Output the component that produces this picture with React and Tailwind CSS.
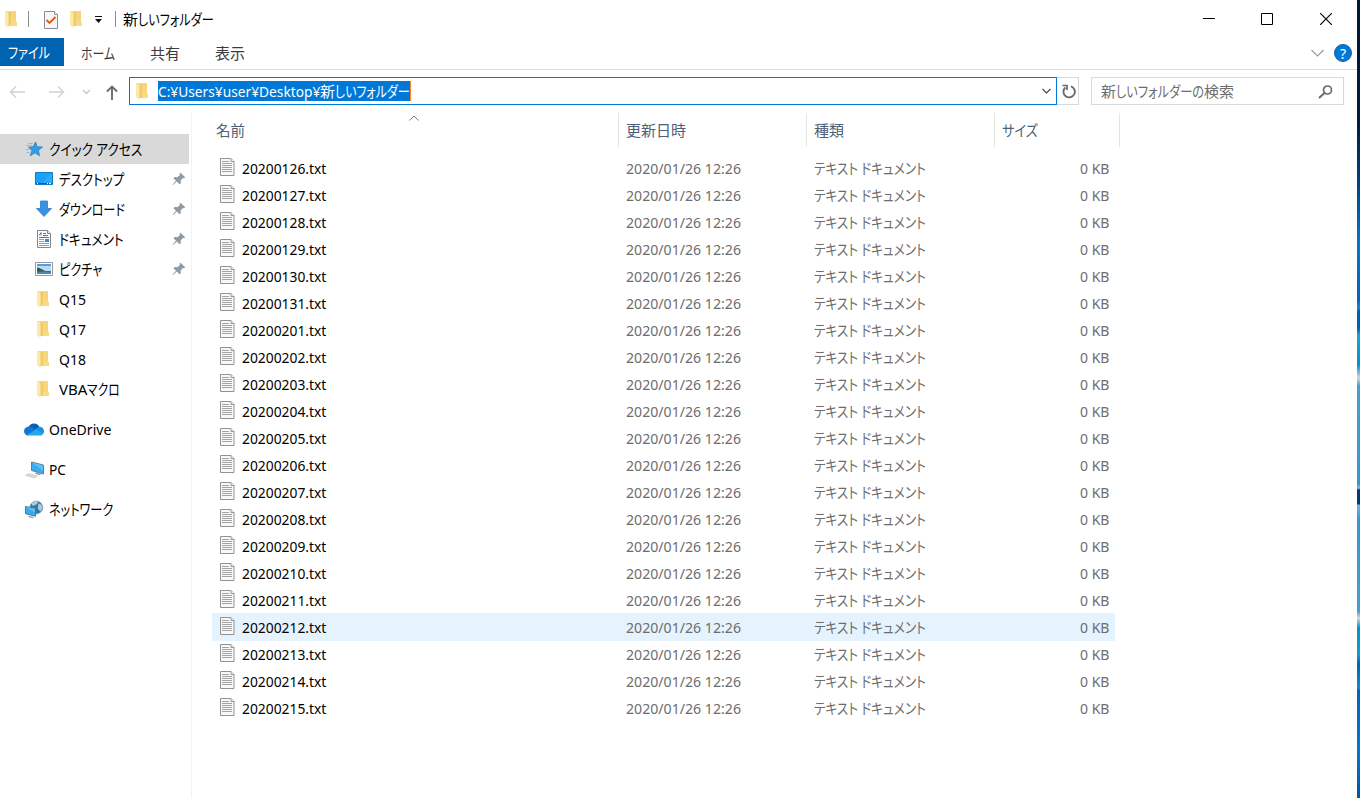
import { useLayoutEffect, useRef, useState } from "react"

const files = [
  "20200126", "20200127", "20200128", "20200129", "20200130", "20200131", "20200201",
  "20200202", "20200203", "20200204", "20200205", "20200206", "20200207", "20200208",
  "20200209", "20200210", "20200211", "20200212", "20200213", "20200214", "20200215"
]

const quickItems = [
  { label: "デスクトップ", width: 65, icon: DesktopIcon, pinned: true },
  { label: "ダウンロード", width: 66, icon: DownloadIcon, pinned: true },
  { label: "ドキュメント", width: 65, icon: DocumentIcon, pinned: true },
  { label: "ピクチャ", width: 43, icon: PictureIcon, pinned: true },
  { label: "Q15", width: 27, icon: FolderIcon },
  { label: "Q17", width: 27, icon: FolderIcon },
  { label: "Q18", width: 27, icon: FolderIcon }
]

// Condenses a run of text to a fixed advance width, like a narrow UI font does
function Fit({ w, latin, children }) {
  const ref = useRef(null)
  const [scale, setScale] = useState(1)

  useLayoutEffect(() => {
    setScale(w / ref.current.offsetWidth)
  }, [w, children])

  return (
    <span className="inline-block shrink-0 align-baseline" style={{ width: w }}>
      <span
        ref={ref}
        className={`inline-block origin-left whitespace-pre ${latin ? "text-[14.5px]" : "[font-feature-settings:'palt']"}`}
        style={{ transform: `scaleX(${scale})` }}
      >
        {children}
      </span>
    </span>
  )
}

function FolderIcon() {
  return (
    <svg width="18" height="18" viewBox="0 0 18 18">
      <path d="M2.500 1H13v10.500l1 .8V16H5z" fill="#f8dc84" />
      <path d="M5 2h3v14H5z" fill="#efcb6c" />
      <path d="M8 1h5v10.500H8z" fill="#f6d67c" />
      <path d="M2 1l3.500 2.200V18L2 15z" fill="#fde9a6" />
    </svg>
  )
}

function CheckPageIcon() {
  return (
    <svg width="16" height="18" viewBox="0 0 16 18">
      <path d="M1.500.5h10l3 3v14h-13z" fill="#f5f6f7" stroke="#8a8f94" />
      <path d="M11.500.5v3h3" fill="#fff" stroke="#8a8f94" />
      <path d="M3.500 9l3 3L12.500 6" fill="none" stroke="#e8560f" strokeWidth="1.900" />
    </svg>
  )
}

function TextFileIcon() {
  return (
    <svg width="15" height="19" viewBox="0 0 15 19">
      <path d="M.5.5h10.500l3 3v14H.5z" fill="#f8f8f8" stroke="#929292" />
      <path d="M11 .5v3h3" fill="#fff" stroke="#929292" />
      <path d="M2 3.500h7M2 5.500h10M2 7.500h10M2 9.500h10M2 11.500h10M2 13.500h10" stroke="#a4a4a4" />
    </svg>
  )
}

function StarIcon() {
  return (
    <svg width="18" height="18" viewBox="0 0 18 18">
      <path d="M9.500 2l1.700 4.800 5.300.2-4 3.300 1 5.500-4.500-3-4.800 3L6 10.500 2.500 7.200l4.700-.4z" fill="#2e9fe6" stroke="#1877bd" strokeWidth=".7" />
      <path d="M2.500 3.500h4M.5 5.500h5M0 9.500h3.500M.5 12.500h3" stroke="#7db9df" strokeWidth=".9" />
    </svg>
  )
}

function DesktopIcon() {
  return (
    <svg width="18" height="18" viewBox="0 0 18 18">
      <path d="M.5 2.500h17v12H.5z" fill="#18a2fb" stroke="#1579bd" />
      <path d="M17 3v11L6 14z" fill="#42b2fb" opacity=".5" />
      <path d="M1 13.500h16" stroke="#0b5d9c" />
      <path d="M2 13.500h1M12 13.500h1M14 13.500h2" stroke="#fff" />
    </svg>
  )
}

function DownloadIcon() {
  return (
    <svg width="18" height="18" viewBox="0 0 18 18">
      <path d="M5.500 1h7v7.500h4L9 16.500 1.500 8.500h4z" fill="#3a93e0" stroke="#2d7cc4" strokeWidth=".8" />
    </svg>
  )
}

function DocumentIcon() {
  return (
    <svg width="18" height="20" viewBox="0 0 18 20">
      <path d="M2.500 1.500h10l3 3v14h-13z" fill="#fff" stroke="#858585" />
      <path d="M12.500 1.500v3h3" fill="#eee" stroke="#858585" />
      <path d="M4 6.500l2-3v3M8 4.500h3M8 6.500h5M4 8.500h10" fill="none" stroke="#2980c2" />
      <path d="M4 10.500h5M4 12.500h5M4 14.500h10M4 16.500h10" stroke="#999" />
      <path d="M10 10h4v3h-4z" fill="#3a8bc4" />
    </svg>
  )
}

function PictureIcon() {
  return (
    <svg width="18" height="18" viewBox="0 0 18 18">
      <path d="M.5 2.500h17v13H.5z" fill="#fff" stroke="#989898" />
      <path d="M2 4h14v10H2z" fill="#b4dbf5" />
      <path d="M2 4h14v2H2z" fill="#5b9be0" />
      <path d="M2 7.500c3 .5 6 2 8 3.500h6v1H2z" fill="#34584f" />
      <path d="M2 11.500h14V14H2z" fill="#4c86a8" />
    </svg>
  )
}

function OneDriveIcon() {
  return (
    <svg width="20" height="14" viewBox="0 0 20 14">
      <path d="M4.500 5A6 6 0 0 1 15.500 5L11 8z" fill="#0a5fb4" />
      <path d="M4.500 4.800C2 4.800 0 6.700 0 9.200s2 4.300 4.300 4.300L13 8.500 8 5.300C7 4.700 5.500 4.600 4.500 4.800z" fill="#0f78d4" />
      <path d="M11.500 7.800l4-3c2.600 0 4.500 2 4.500 4.400 0 2.300-1.800 4.300-4.200 4.300z" fill="#1490df" />
      <path d="M2.500 12.900L12.500 7.500l6.800 4c-.8 1.300-2 2-3.500 2H4.500c-.8 0-1.400-.2-2-.6z" fill="#28a8ea" />
    </svg>
  )
}

function PcIcon() {
  return (
    <svg width="20" height="18" viewBox="0 0 20 18">
      <path d="M6.500 1l12 3v9l-12-3.500z" fill="#36adf0" stroke="#66737c" strokeWidth=".9" />
      <path d="M7 1.500l11 2.800v5.700z" fill="#75ccf8" opacity=".6" />
      <path d="M11 11.500l5 1.500-1 1.200-5-1.500z" fill="#8b969e" />
      <path d="M3.500 12.500l9 2.500-3 2-9-2.500z" fill="#d5dade" stroke="#b4bbc1" strokeWidth=".5" />
    </svg>
  )
}

function NetworkIcon() {
  return (
    <svg width="20" height="20" viewBox="0 0 20 20">
      <circle cx="12.300" cy="7.500" r="6.500" fill="#3878a0" stroke="#8fa9b8" strokeWidth=".7" />
      <path d="M7.500 3.500c2-2.500 5-2.500 6.500-2l-1 2.500-4 2zM14.500 3.500l3 1.200.8 3.300-2 3.500-2.500-3z" fill="#a9d0e2" />
      <path d="M1.500 6.500l10 1.800v7.900l-10-2.500z" fill="#35aef0" stroke="#4a718c" strokeWidth=".9" />
      <path d="M2 7l9 1.600v4z" fill="#78cdf7" opacity=".6" />
      <path d="M5 15.500l5 1.500-1 1.500-5-1.500z" fill="#a8b0b6" />
    </svg>
  )
}

function PinIcon() {
  return (
    <svg width="14" height="14" viewBox="0 0 14 14">
      <path d="M8.500.7l4.700 4.600-1.200 1-1-.3-2.400 2.500.2 2.700-1.200 1L4.800 9.500 1 13l-.4-.4L4 8.700 1.500 6.200l1-1.200 2.800.3L8 3l-.5-1.300z" fill="#8f9aa3" />
    </svg>
  )
}

function TitleBar() {
  return (
    <header className="flex h-[38px] items-center text-[15px] text-black">
      <div className="flex h-[38px] w-[123px] shrink-0 items-center">
        <div className="ml-[3px] w-[25px]"><FolderIcon /></div>
        <div className="h-4 w-px bg-[#8f8f8f]" />
        <div className="ml-[14px] pt-[1px]"><CheckPageIcon /></div>
        <div className="ml-[9px]"><FolderIcon /></div>
        <svg className="mt-[2px] ml-[8px]" width="8" height="8" viewBox="0 0 8 8">
          <path d="M1 .5h7" stroke="#111" />
          <path d="M1 3h7L4.500 7z" fill="#111" />
        </svg>
        <div className="ml-[13px] h-4 w-px bg-[#8f8f8f]" />
      </div>
      <div className="flex items-baseline"><Fit w={15}>新</Fit><Fit w={76}>しいフォルダー</Fit></div>
      <div className="ml-auto flex items-center pr-[25px]">
        <svg width="12" height="12" viewBox="0 0 12 12"><path d="M0 5.500h12" stroke="#000" /></svg>
        <svg className="ml-[46px]" width="12" height="12" viewBox="0 0 12 12"><path d="M.5.5h11v11H.5z" fill="none" stroke="#000" /></svg>
        <svg className="ml-[47px]" width="12" height="12" viewBox="0 0 12 12"><path d="M0 0l12 12M12 0L0 12" stroke="#000" strokeWidth="1.200" /></svg>
      </div>
    </header>
  )
}

function Ribbon() {
  return (
    <nav className="flex h-8 items-start border-b border-[#dadbdc] text-[15px] text-[#3b3b3b]">
      <div className="flex h-7 w-16 items-center bg-[#0063b1] pl-[8px] text-white"><Fit w={42}>ファイル</Fit></div>
      <div className="flex h-[30px] items-center pl-[17px]">
        <div className="w-[69px]"><Fit w={34}>ホーム</Fit></div>
        <div className="w-[65px]"><Fit w={30}>共有</Fit></div>
        <Fit w={30}>表示</Fit>
      </div>
      <div className="ml-auto flex h-[30px] items-center pr-[5px]">
        <svg width="13" height="8" viewBox="0 0 13 8"><path d="M.5 1l6 6 6-6" fill="none" stroke="#9b9b9b" strokeWidth="1.200" /></svg>
        <div className="ml-[10px] flex h-[18px] w-[18px] items-center justify-center rounded-full border border-[#1b5fa5] bg-[#0078d7] text-[14px] text-white">?</div>
      </div>
    </nav>
  )
}

function AddressBar() {
  return (
    <div className="flex h-[42px] items-center text-[15px]">
      <svg className="mt-[2px] ml-[9px] shrink-0" width="17" height="14" viewBox="0 0 17 14"><path d="M7 1.500L1.500 7 7 12.500M1.500 7H16" fill="none" stroke="#d2d2d2" strokeWidth="1.400" /></svg>
      <svg className="mt-[2px] ml-[22px] shrink-0" width="17" height="14" viewBox="0 0 17 14"><path d="M10 1.500L15.500 7 10 12.500M15.500 7H1" fill="none" stroke="#d2d2d2" strokeWidth="1.400" /></svg>
      <svg className="mt-[2px] ml-[17px] shrink-0" width="9" height="6" viewBox="0 0 9 6"><path d="M1 1l3.500 3.500L8 1" fill="none" stroke="#c8c8c8" strokeWidth="1.500" /></svg>
      <svg className="mt-[3px] ml-[15px] shrink-0" width="12" height="16" viewBox="0 0 12 16"><path d="M1 6.500L6 1.500l5 5M6 1.500V15" fill="none" stroke="#6b6b6b" strokeWidth="1.900" /></svg>
      <div className="ml-[11px] flex h-7 w-[928px] shrink-0 items-center border border-[#0078d7] bg-white">
        <div className="ml-[4px] w-[24px]"><FolderIcon /></div>
        <div className="flex h-5 items-center border-r border-[#ff8728] bg-[#0078d7] leading-5 text-white">
          <Fit w={162} latin>C:¥Users¥user¥Desktop¥</Fit><Fit w={15}>新</Fit><Fit w={75}>しいフォルダー</Fit>
        </div>
        <svg className="mr-[5px] ml-auto" width="9" height="6" viewBox="0 0 9 6"><path d="M.5 1l4 4 4-4" fill="none" stroke="#444" strokeWidth="1.100" /></svg>
      </div>
      <div className="flex h-7 w-[22px] shrink-0 items-center justify-center border border-l-0 border-[#d9d9d9] pl-[2px]">
        <svg width="14" height="15" viewBox="0 0 14 15">
          <path d="M9 2.300A5.700 5.700 0 1 1 3.300 3.500" fill="none" stroke="#6b6b6b" strokeWidth="1.900" />
          <path d="M.5 1.500h4.500v4.500" fill="none" stroke="#6b6b6b" strokeWidth="1.700" />
        </svg>
      </div>
      <div className="ml-3 flex h-7 w-[253px] shrink-0 items-center border border-[#d9d9d9] pr-[10px] pl-[9px] text-[#6d6d6d]">
        <Fit w={15}>新</Fit><Fit w={88}>しいフォルダーの</Fit><Fit w={30}>検索</Fit>
        <svg className="mt-[2px] ml-auto" width="15" height="14" viewBox="0 0 15 14">
          <circle cx="9.500" cy="5" r="4" fill="none" stroke="#6b6b6b" strokeWidth="1.700" />
          <path d="M6.500 8L1 13" stroke="#6b6b6b" strokeWidth="2" />
        </svg>
      </div>
    </div>
  )
}

function Sidebar() {
  return (
    <aside className="w-[192px] shrink-0 border-r border-[#f3f3f3] pt-[22px] text-[15px] text-black">
      <div className="flex h-[30px] w-[189px] items-center bg-[#d9d9d9] pl-[26px]">
        <StarIcon />
        <div className="ml-[5px] flex"><Fit w={93}>クイック アクセス</Fit></div>
      </div>
      {quickItems.map(({ label, width, icon: Icon, pinned }) => (
        <div key={label} className="flex h-[30px] w-[189px] items-center pr-[3px] pl-[35px]">
          <div className="w-6"><Icon /></div>
          <Fit w={width} latin={!pinned}>{label}</Fit>
          {pinned && <div className="ml-auto"><PinIcon /></div>}
        </div>
      ))}
      <div className="flex h-[30px] items-center pl-[35px]">
        <div className="w-6"><FolderIcon /></div>
        <Fit w={28} latin>VBA</Fit><Fit w={33}>マクロ</Fit>
      </div>
      <div className="mt-[10px] flex h-[30px] items-center pl-6">
        <div className="w-[25px]"><OneDriveIcon /></div>
        <Fit w={62} latin>OneDrive</Fit>
      </div>
      <div className="mt-[10px] flex h-[30px] items-center pl-[25px]">
        <div className="w-6 pt-[2px]"><PcIcon /></div>
        <Fit w={17} latin>PC</Fit>
      </div>
      <div className="mt-[10px] flex h-[30px] items-center pl-6">
        <div className="w-[25px] pt-[1px]"><NetworkIcon /></div>
        <Fit w={64}>ネットワーク</Fit>
      </div>
    </aside>
  )
}

function FileList() {
  return (
    <main className="flex-1 pt-[1px] text-[15px]">
      <div className="flex h-[34px] items-center text-[#4c607a]">
        <div className="relative flex h-[34px] w-[427px] items-center border-r border-[#e5e5e5] pl-6">
          <Fit w={29}>名前</Fit>
          <svg className="absolute top-[2px] left-[217px]" width="10" height="6" viewBox="0 0 10 6"><path d="M.5 5.500L5 1l4.500 4.500" fill="none" stroke="#777" /></svg>
        </div>
        <div className="flex h-[34px] w-[188px] items-center border-r border-[#e5e5e5] pl-[7px]">更新日時</div>
        <div className="flex h-[34px] w-[188px] items-center border-r border-[#e5e5e5] pl-[7px]">種類</div>
        <div className="flex h-[34px] w-[125px] items-center border-r border-[#e5e5e5] pl-[7px]"><Fit w={36}>サイズ</Fit></div>
      </div>
      <div className="ml-5 w-[903px] pt-[7px]">
        {files.map(name => (
          <div
            key={name}
            className={`mb-[-1px] flex h-7 items-center text-[#6d6d6d] ${name === "20200212" ? "bg-[#e5f3ff]" : ""}`}
          >
            <div className="w-[30px] pb-[2px] pl-2"><TextFileIcon /></div>
            <div className="flex w-96 text-black"><Fit w={84} latin>{`${name}.txt`}</Fit></div>
            <div className="flex w-[188px]"><Fit w={115} latin>2020/01/26 12:26</Fit></div>
            <div className="flex pt-px"><Fit w={112}>テキスト ドキュメント</Fit></div>
            <div className="mr-[6px] ml-auto flex"><Fit w={29} latin>0 KB</Fit></div>
          </div>
        ))}
      </div>
    </main>
  )
}

export default function App() {
  return (
    <div className="flex h-[798px] w-[1360px] overflow-hidden bg-white font-['Noto_Sans','Noto_Sans_CJK_JP',sans-serif]">
      <div className="flex w-[1357px] shrink-0 flex-col">
        <TitleBar />
        <Ribbon />
        <AddressBar />
        <div className="flex flex-1">
          <Sidebar />
          <FileList />
        </div>
      </div>
      <div className="w-[3px] bg-[linear-gradient(#001a38_0px,#001c3c_120px,#00407f_180px,#0078d0_245px,#0063c0_300px,#0a8cd0_307px,#005fb8_312px,#0060b8_328px,#1aa5cc_335px,#0092cf_365px,#d0d8d8_378px,#4c9ccb_386px,#3496d0_484px,#80bada_488px,#003a75_490px,#003a75_504px,#70b4da_505px,#3496d0_520px,#4c9ccb_611px,#d0d8d8_618px,#0092cf_628px,#0e9fd0_655px,#0062bb_664px,#0a8cd0_688px,#0063c0_691px,#0078d8_750px,#0055a4_798px)]" />
    </div>
  )
}
